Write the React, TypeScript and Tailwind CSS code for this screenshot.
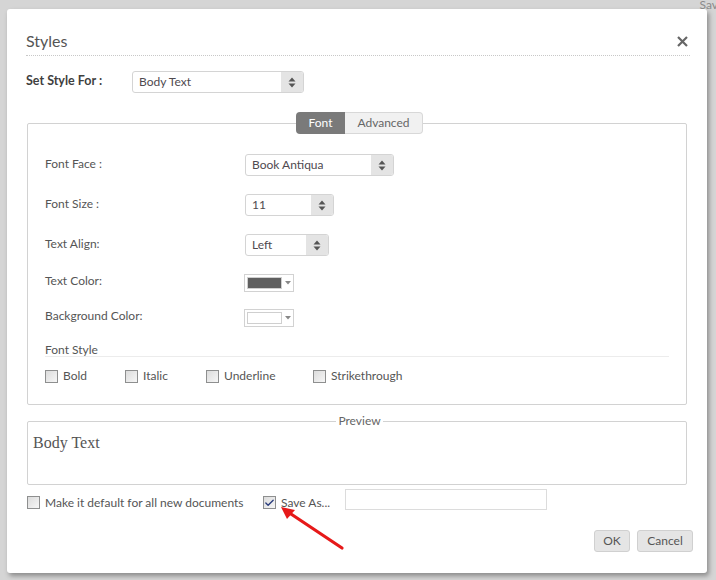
import { Check } from 'lucide-react';

const fieldRows = [
  { label: 'Font Face :', kind: 'select', value: 'Book Antiqua', width: 'w-[149px]' },
  { label: 'Font Size :', kind: 'select', value: '11', width: 'w-[89px]' },
  { label: 'Text Align:', kind: 'select', value: 'Left', width: 'w-[84px]' },
  { label: 'Text Color:', kind: 'color', value: '#5f5f5f' },
  { label: 'Background Color:', kind: 'color', value: '#ffffff' },
];

const styleBoxes = [
  { label: 'Bold', width: 'w-[80px]' },
  { label: 'Italic', width: 'w-[81px]' },
  { label: 'Underline', width: 'w-[107px]' },
  { label: 'Strikethrough', width: 'w-auto' },
];

function Spinner() {
  return (
    <svg width="8" height="11" viewBox="0 0 8 11" className="text-[#555]">
      <path d="M4 0.5 L7.5 4.5 H0.5 Z" fill="currentColor" />
      <path d="M4 10.5 L7.5 6.5 H0.5 Z" fill="currentColor" />
    </svg>
  );
}

function SelectBox({ value, width }: { value: string; width: string }) {
  return (
    <div className={`${width} h-[22px] flex border border-[#d4d4d4] rounded-[3px] overflow-hidden bg-white`}>
      <div className="flex-1 flex items-center pl-[6px] text-[12px] text-[#4f4a4f]">{value}</div>
      <div className="w-[22px] bg-[#e4e4e4] flex items-center justify-center">
        <Spinner />
      </div>
    </div>
  );
}

function ColorBox({ color }: { color: string }) {
  return (
    <div className="w-[50px] h-[18px] border border-[#d2d2d2] bg-white flex items-center pl-[2px] -ml-[1px]">
      <div className="w-[35px] h-[12px] border border-[#cfcfcf]" style={{ backgroundColor: color }} />
      <div className="flex-1 flex justify-center">
        <svg width="6" height="4" viewBox="0 0 6 4">
          <path d="M0 0 H6 L3 3.5 Z" fill="#888" />
        </svg>
      </div>
    </div>
  );
}

function CheckBox({ checked = false }: { checked?: boolean }) {
  return (
    <div className="w-[13px] h-[13px] border border-[#8e8f8f] bg-gradient-to-br from-[#dcdcdc] to-[#f6f6f6] flex items-center justify-center shrink-0">
      {checked && <Check size={12} strokeWidth={3} className="text-[#2b3d7c]" />}
    </div>
  );
}

export default function App() {
  return (
    <div className="w-[716px] h-[580px] bg-[#d5d5d5] relative overflow-hidden font-['Lato','Open_Sans',sans-serif]">
      <div className="flex justify-end h-[9px] text-[12px] leading-[10px] text-[#8a8a8a] overflow-hidden -mb-[9px]">
        <span className="mr-[-2px]">Sav</span>
      </div>
      <div className="ml-[7px] mt-[9px] w-[700px] h-[564px] bg-white rounded-[3px] shadow-[2px_3px_5px_rgba(0,0,0,0.35)] flex flex-col">
        {/* header */}
        <div className="mx-[19px] mr-[17px] pt-[22px] h-[47px] border-b border-dotted border-[#c8c8c8] flex items-start justify-between">
          <span className="text-[16px] leading-[20px] text-[#555]">Styles</span>
          <svg width="11" height="11" viewBox="0 0 11 11" className="mt-[5px] mr-[2px]">
            <path d="M1 1 L10 10 M10 1 L1 10" stroke="#666" strokeWidth="2.2" />
          </svg>
        </div>

        <div className="mx-[19px] mt-[15px] h-[22px] flex items-center">
          <span className="w-[106px] text-[12.5px] font-bold text-[#3f3f3f] -mt-[1px]">Set Style For :</span>
          <SelectBox value="Body Text" width="w-[172px]" />
        </div>

        {/* font fieldset */}
        <div className="mx-[20px] mt-[30px] h-[282px] border border-[#d2d2d2] rounded-[2px] flex flex-col">
          <div className="-mt-[12px] h-[22px] flex justify-center pl-[5px]">
            <div className="w-[49px] bg-[#7a7a7a] rounded-l-[4px] flex items-center justify-center text-[12px] text-white">Font</div>
            <div className="w-[78px] bg-[#f1f1f1] border border-l-0 border-[#d8d8d8] rounded-r-[4px] flex items-center justify-center text-[12px] text-[#666]">Advanced</div>
          </div>

          <div className="pl-[17px] pr-[17px] pt-[20px] flex flex-col gap-[18px]">
            {fieldRows.map((row) => (
              <div key={row.label} className={`flex items-center ${row.kind === 'select' ? 'h-[22px]' : 'h-[17px]'}`}>
                <span className="w-[200px] text-[12px] text-[#555] -mt-[3px]">{row.label}</span>
                {row.kind === 'select' ? (
                  <SelectBox value={row.value} width={row.width ?? ''} />
                ) : (
                  <ColorBox color={row.value} />
                )}
              </div>
            ))}
          </div>

          <div className="mx-[17px] mt-[17px] h-[14px] border-b border-[#ececec] text-[12px] leading-[13px] text-[#555]">Font Style</div>
          <div className="mx-[17px] mt-[11px] h-[16px] flex items-center">
            {styleBoxes.map((b) => (
              <div key={b.label} className={`${b.width} flex items-center gap-[5px]`}>
                <CheckBox />
                <span className="text-[12px] text-[#555]">{b.label}</span>
              </div>
            ))}
          </div>
        </div>

        {/* preview */}
        <div className="mx-[20px] mt-[16px] h-[64px] border border-[#d2d2d2] rounded-[2px] flex flex-col">
          <div className="-mt-[8px] h-[14px] flex justify-center pl-[5px]">
            <span className="bg-white px-[2px] text-[12px] leading-[14px] text-[#666]">Preview</span>
          </div>
          <div className="pl-[5px] pt-[3px] text-[16px] text-[#555] font-['Liberation_Serif','DejaVu_Serif',serif]">Body Text</div>
        </div>

        {/* bottom options */}
        <div className="ml-[20px] mt-[4px] h-[21px] flex items-center">
          <div className="flex items-center gap-[5px] w-[236px] mt-[6px]">
            <CheckBox />
            <span className="text-[12px] text-[#555]">Make it default for all new documents</span>
          </div>
          <div className="flex items-center gap-[5px] w-[82px] mt-[6px]">
            <CheckBox checked />
            <span className="text-[12px] text-[#555]">Save As...</span>
          </div>
          <div className="w-[202px] h-[21px] border border-[#dcdcdc] bg-white" />
        </div>

        <div className="mr-[14px] mt-[20px] flex justify-end gap-[7px]">
          <button className="w-[36px] h-[22px] bg-[#e5e5e5] border border-[#d0d0d0] rounded-[3px] text-[12px] text-[#555]">OK</button>
          <button className="w-[56px] h-[22px] bg-[#e5e5e5] border border-[#d0d0d0] rounded-[3px] text-[12px] text-[#555]">Cancel</button>
        </div>
      </div>

      {/* annotation arrow */}
      <svg className="absolute left-[278px] top-[504px]" width="70" height="50" viewBox="0 0 70 50">
        <path d="M64 44 L10 8" stroke="#e61919" strokeWidth="3.2" strokeLinecap="round" />
        <path d="M3 3 L17 6 L9 15 Z" fill="#e61919" />
      </svg>
    </div>
  );
}
